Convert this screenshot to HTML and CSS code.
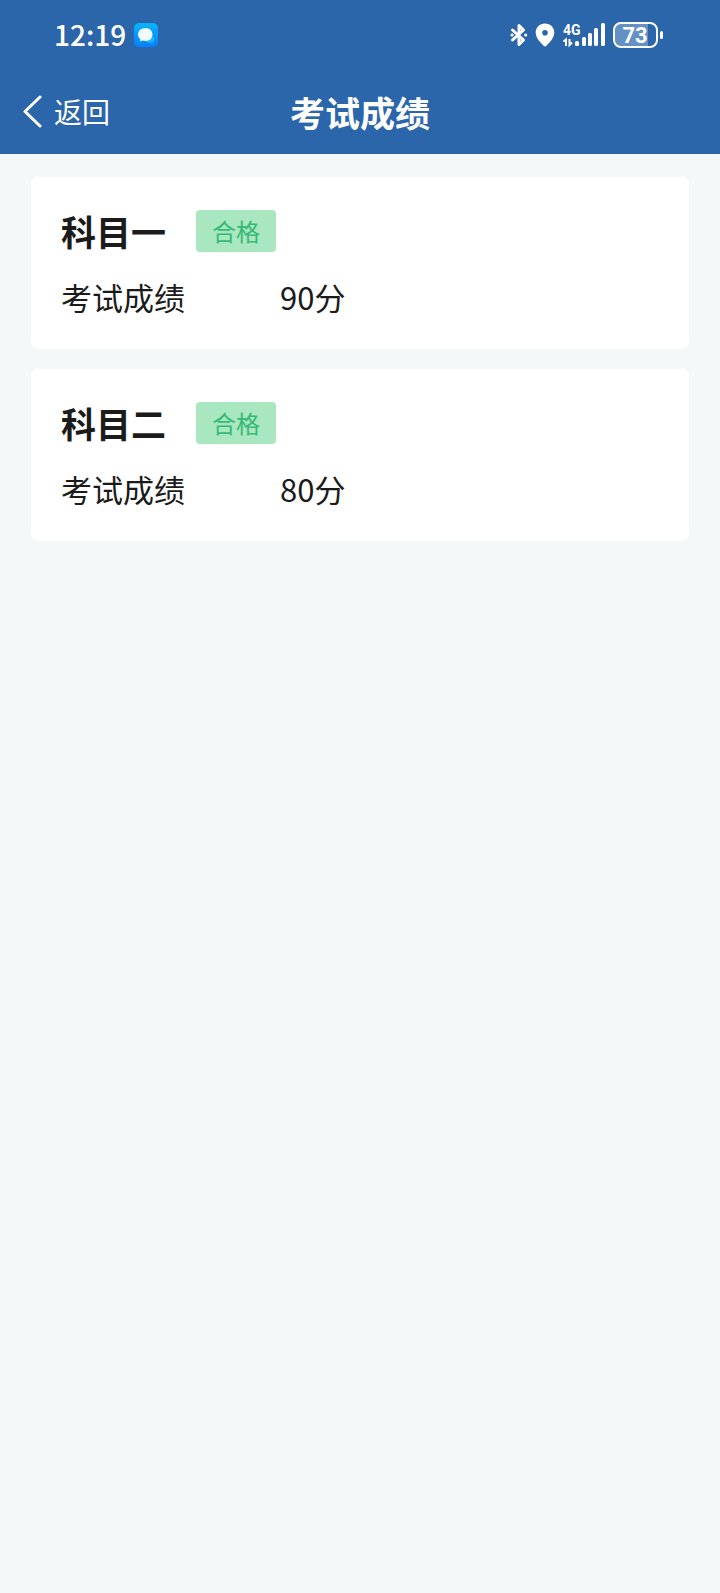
FILE: index.html
```html
<!DOCTYPE html>
<html lang="zh-CN">
<head>
<meta charset="utf-8">
<meta name="viewport" content="width=device-width, initial-scale=1">
<title>考试成绩</title>
<link rel="stylesheet" href="styles.css">
</head>
<body>
<header class="header">
  <div class="status">
    <div class="status-left">
      <span class="clock">12:19</span>
      <svg class="app-icon" width="24" height="24" viewBox="0 0 24 24" aria-hidden="true">
        <defs>
          <linearGradient id="app-bg" x1="0" y1="0" x2="0" y2="1">
            <stop offset="0" stop-color="#08b4fb"/>
            <stop offset="1" stop-color="#0580fb"/>
          </linearGradient>
        </defs>
        <rect width="24" height="24" rx="5" fill="url(#app-bg)"/>
        <path d="M12 18.500a5 4.500 0 0 0 5 1h3l-.6-1.600a4.500 4.500 0 0 0 0-5z" fill="#18b7fa"/>
        <path d="M11.500 5c4 0 7 2.800 7 6.500s-3 6.500-7 6.500c-1 0-1.900-.1-2.700-.4L6 18.600l.3-2.500C4.900 15 4 13.400 4 11.500 4 7.800 7.400 5 11.500 5z" fill="#f0faff"/>
      </svg>
    </div>
    <div class="status-right">
      <svg width="18" height="26" viewBox="0 0 18 26" fill="none" stroke="#fff" stroke-width="3" stroke-linecap="round" stroke-linejoin="round" aria-hidden="true">
        <path d="M2.500 8 13.500 18 9 22.500V3.500L13.500 8l-11 10"/>
        <path d="M2 13h.2M15.600 13h.2"/>
      </svg>
      <svg width="20" height="26" viewBox="0 0 20 26" aria-hidden="true">
        <path fill="#fff" fill-rule="evenodd" d="M10 1.500c5.300 0 9.300 3.900 9.300 9 0 5.600-5.200 10.400-7.900 13.200-.9.900-1.900.9-2.800 0C5.900 20.900.7 16.100.7 10.500c0-5.100 4-9 9.300-9zM10 8a2.800 2.800 0 1 0 0 5.600A2.800 2.800 0 0 0 10 8z"/>
      </svg>
      <svg class="signal" width="43" height="26" viewBox="0 0 43 26" role="img" aria-label="4G">
        <text class="network" x="0" y="13">4G</text>
        <path d="M.5 19.500 3 17.500V24M6.500 17V23L9 20.500" fill="none" stroke="#fff" stroke-width="2"/>
        <g fill="#fff">
          <rect x="12" y="19" width="4" height="5" rx="1.500"/>
          <rect x="19" y="15" width="4" height="9" rx="1.500"/>
          <rect x="25" y="11" width="4" height="13" rx="1.500"/>
          <rect x="31" y="6" width="4" height="18" rx="1.500"/>
          <rect x="38" y="1" width="4" height="23" rx="1.500"/>
        </g>
      </svg>
      <svg width="50" height="26" viewBox="0 0 50 26" role="img" aria-label="73">
        <path d="M8 2h27v22H8a6 6 0 0 1-6-6V8a6 6 0 0 1 6-6z" fill="#6490c3"/>
        <rect x="1" y="1" width="43" height="24" rx="7" fill="none" stroke="#fff" stroke-width="2"/>
        <rect x="47" y="9" width="3" height="8" rx="1.500" fill="#fff"/>
        <text class="charge" x="22" y="21" text-anchor="middle">73</text>
      </svg>
    </div>
  </div>
  <nav class="nav">
    <button class="back" type="button">
      <svg width="20" height="34" viewBox="0 0 20 34" fill="none" stroke="#fff" stroke-width="3" stroke-linecap="round" stroke-linejoin="round" aria-hidden="true"><path d="M17 3 2 17.500 17 32"/></svg>
      <span>返回</span>
    </button>
    <h1 class="title">考试成绩</h1>
  </nav>
</header>
<main class="results">
  <section class="card">
    <div class="card-head">
      <h2 class="subject">科目一</h2>
      <span class="badge">合格</span>
    </div>
    <dl class="score">
      <dt>考试成绩</dt>
      <dd>90分</dd>
    </dl>
  </section>
  <section class="card">
    <div class="card-head">
      <h2 class="subject">科目二</h2>
      <span class="badge">合格</span>
    </div>
    <dl class="score">
      <dt>考试成绩</dt>
      <dd>80分</dd>
    </dl>
  </section>
</main>
</body>
</html>
```
FILE: styles.css
```css
* {
  box-sizing: border-box;
}

body {
  margin: 0;
  min-height: 100vh;
  background: #f4f8f9;
  color: #1b1b1b;
  font-family: "Noto Sans CJK SC", sans-serif;
}

h1,
h2,
dl,
dd {
  margin: 0;
}

.header {
  background: #2c66aa;
  color: #fff;
}

.status {
  display: flex;
  align-items: center;
  justify-content: space-between;
  height: 70px;
  padding: 0 57px 0 54px;
}

.status-left,
.status-right {
  display: flex;
  align-items: center;
}

.status-left {
  gap: 8px;
}

.status-right {
  gap: 7px;
}

.signal {
  margin-left: 1px;
}

.clock {
  font-size: 28px;
  font-weight: 500;
  line-height: 40px;
  padding-bottom: 2px;
}

.network {
  fill: #fff;
  font: 700 14px Roboto, sans-serif;
}

.charge {
  fill: #fff;
  font: 700 22px Roboto, sans-serif;
}

.nav {
  display: grid;
  grid-template-columns: 1fr auto 1fr;
  align-items: center;
  height: 84px;
  padding: 0 23px;
}

.back {
  display: flex;
  align-items: center;
  justify-self: start;
  gap: 11px;
  padding: 0 0 2px;
  border: 0;
  background: none;
  color: inherit;
  font: inherit;
  font-size: 28px;
  line-height: 40px;
}

.title {
  font-size: 35px;
  font-weight: 700;
  line-height: 50px;
}

.results {
  display: flex;
  flex-direction: column;
  gap: 20px;
  padding: 23px 31px;
}

.card {
  display: flex;
  flex-direction: column;
  gap: 23px;
  padding: 33px 30px 30px;
  border-radius: 7px;
  background: #fff;
}

.card-head {
  display: flex;
  align-items: center;
  gap: 30px;
}

.subject {
  font-size: 35px;
  font-weight: 700;
  line-height: 42px;
}

.badge {
  padding: 0 16px;
  border-radius: 4px;
  background: #a9e7c0;
  color: #36ba77;
  font-size: 24px;
  line-height: 42px;
}

.score {
  display: grid;
  grid-template-columns: 219px 1fr;
  font-size: 31px;
  line-height: 44px;
}
```
